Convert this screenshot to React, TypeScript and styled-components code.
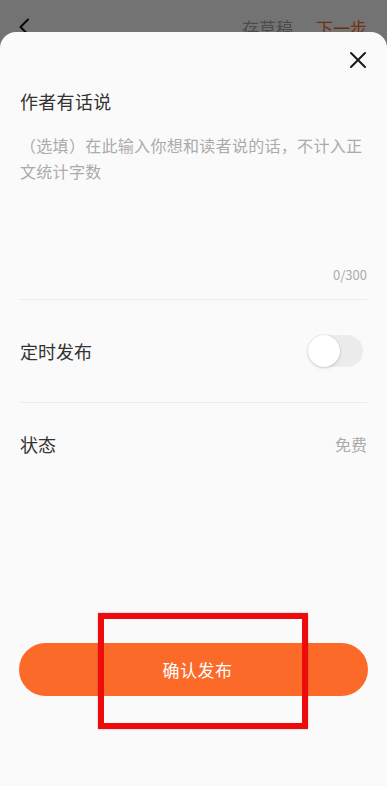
import React, { useState } from "react";
import styled, { createGlobalStyle } from "styled-components";

const GlobalStyle = createGlobalStyle`
    * {
        box-sizing: border-box;
    }
    html, body {
        margin: 0;
        padding: 0;
        background: #ffffff;
    }
    body {
        font-family: "Noto Sans CJK SC", "Noto Sans", Roboto, sans-serif;
    }
`;

const accent = "#fc6a2a";

const Screen = styled.div`
    position: relative;
    width: 100%;
    height: 786px;
    overflow: hidden;
    background: #f2f2f2;
`;

const Header = styled.div`
    display: flex;
    align-items: center;
    justify-content: space-between;
    height: 54px;
    padding: 0 20px 0 18px;
    background: #ffffff;
`;

const BackButton = styled.div`
    display: flex;
    align-items: center;
    width: 16px;
    height: 20px;
`;

const HeaderActions = styled.div`
    display: flex;
    align-items: center;
    gap: 23px;
`;

const HeaderLink = styled.span<{ $primary?: boolean }>`
    font-size: 17px;
    color: ${(p) => (p.$primary ? accent : "#a8a8a8")};
`;

const Backdrop = styled.div`
    position: absolute;
    inset: 0;
    background: rgba(0, 0, 0, 0.55);
`;

const Sheet = styled.div`
    position: absolute;
    left: 0;
    right: 0;
    top: 32px;
    bottom: 0;
    display: flex;
    flex-direction: column;
    padding: 0 20px 90px;
    border-radius: 16px 16px 0 0;
    background: #fafafa;
`;

const CloseRow = styled.div`
    display: flex;
    align-items: center;
    justify-content: flex-end;
    height: 56px;
`;

const Title = styled.div`
    font-size: 18px;
    line-height: 26px;
    letter-spacing: 0.3px;
    color: #333333;
`;

const NoteInput = styled.textarea`
    height: 134px;
    margin-top: 18px;
    padding: 0;
    border: none;
    outline: none;
    resize: none;
    background: transparent;
    font-family: inherit;
    font-size: 16px;
    line-height: 26px;
    letter-spacing: 0.3px;
    color: #333333;

    &::placeholder {
        color: #ababab;
    }
`;

const Counter = styled.div`
    text-align: right;
    font-size: 13px;
    line-height: 18px;
    color: #ababab;
    margin-bottom: 15px;
`;

const Divider = styled.div`
    height: 1px;
    background: #ececec;
`;

const Row = styled.div<{ $height: number }>`
    display: flex;
    align-items: center;
    justify-content: space-between;
    height: ${(p) => p.$height}px;
`;

const RowLabel = styled.span`
    font-size: 18px;
    color: #333333;
`;

const RowValue = styled.span`
    font-size: 16px;
    color: #ababab;
`;

const Toggle = styled.button<{ $on: boolean }>`
    position: relative;
    width: 55px;
    height: 32px;
    margin-right: 4px;
    padding: 0;
    border: none;
    border-radius: 16px;
    background: ${(p) => (p.$on ? accent : "#ececec")};
    cursor: pointer;

    &::after {
        content: "";
        position: absolute;
        top: 0;
        left: ${(p) => (p.$on ? "23px" : "0")};
        width: 32px;
        height: 32px;
        border-radius: 50%;
        background: #ffffff;
        box-shadow: 0 1px 3px rgba(0, 0, 0, 0.18), 0 0 0 0.5px rgba(0, 0, 0, 0.06);
    }
`;

const Footer = styled.div`
    margin-top: auto;
`;

const ConfirmButton = styled.button`
    display: flex;
    align-items: center;
    justify-content: center;
    width: calc(100% + 2px);
    height: 53px;
    margin: 0 -1px;
    padding: 0 0 0 8px;
    border: none;
    border-radius: 27px;
    background: ${accent};
    color: #ffffff;
    font-family: inherit;
    font-size: 17px;
    letter-spacing: 0.5px;
`;

const Highlight = styled.div`
    position: absolute;
    left: 98px;
    top: 613px;
    width: 210px;
    height: 116px;
    border: 6px solid #ee0b0b;
    box-shadow: 0 0 2px rgba(0, 0, 0, 0.25);
    pointer-events: none;
`;

const App = () => {
    const [timed, setTimed] = useState(false);

    return (
        <Screen>
            <GlobalStyle />
            <Header>
                <BackButton>
                    <svg width="14" height="18" viewBox="0 0 14 18">
                        <polyline
                            points="10,1.5 2.5,9 10,16.5"
                            fill="none"
                            stroke="#111"
                            strokeWidth="2"
                            strokeLinecap="round"
                            strokeLinejoin="round"
                        />
                    </svg>
                </BackButton>
                <HeaderActions>
                    <HeaderLink>存草稿</HeaderLink>
                    <HeaderLink $primary>下一步</HeaderLink>
                </HeaderActions>
            </Header>
            <Backdrop />
            <Sheet>
                <CloseRow>
                    <svg width="18" height="18" viewBox="0 0 18 18">
                        <path
                            d="M2 2 L16 16 M16 2 L2 16"
                            stroke="#1a1a1a"
                            strokeWidth="2"
                            strokeLinecap="round"
                        />
                    </svg>
                </CloseRow>
                <Title>作者有话说</Title>
                <NoteInput
                    maxLength={300}
                    placeholder="（选填）在此输入你想和读者说的话，不计入正文统计字数"
                />
                <Counter>0/300</Counter>
                <Divider />
                <Row $height={102}>
                    <RowLabel>定时发布</RowLabel>
                    <Toggle $on={timed} onClick={() => setTimed(!timed)} />
                </Row>
                <Divider />
                <Row $height={82}>
                    <RowLabel>状态</RowLabel>
                    <RowValue>免费</RowValue>
                </Row>
                <Footer>
                    <ConfirmButton>确认发布</ConfirmButton>
                </Footer>
            </Sheet>
            <Highlight />
        </Screen>
    );
};

export default App;
